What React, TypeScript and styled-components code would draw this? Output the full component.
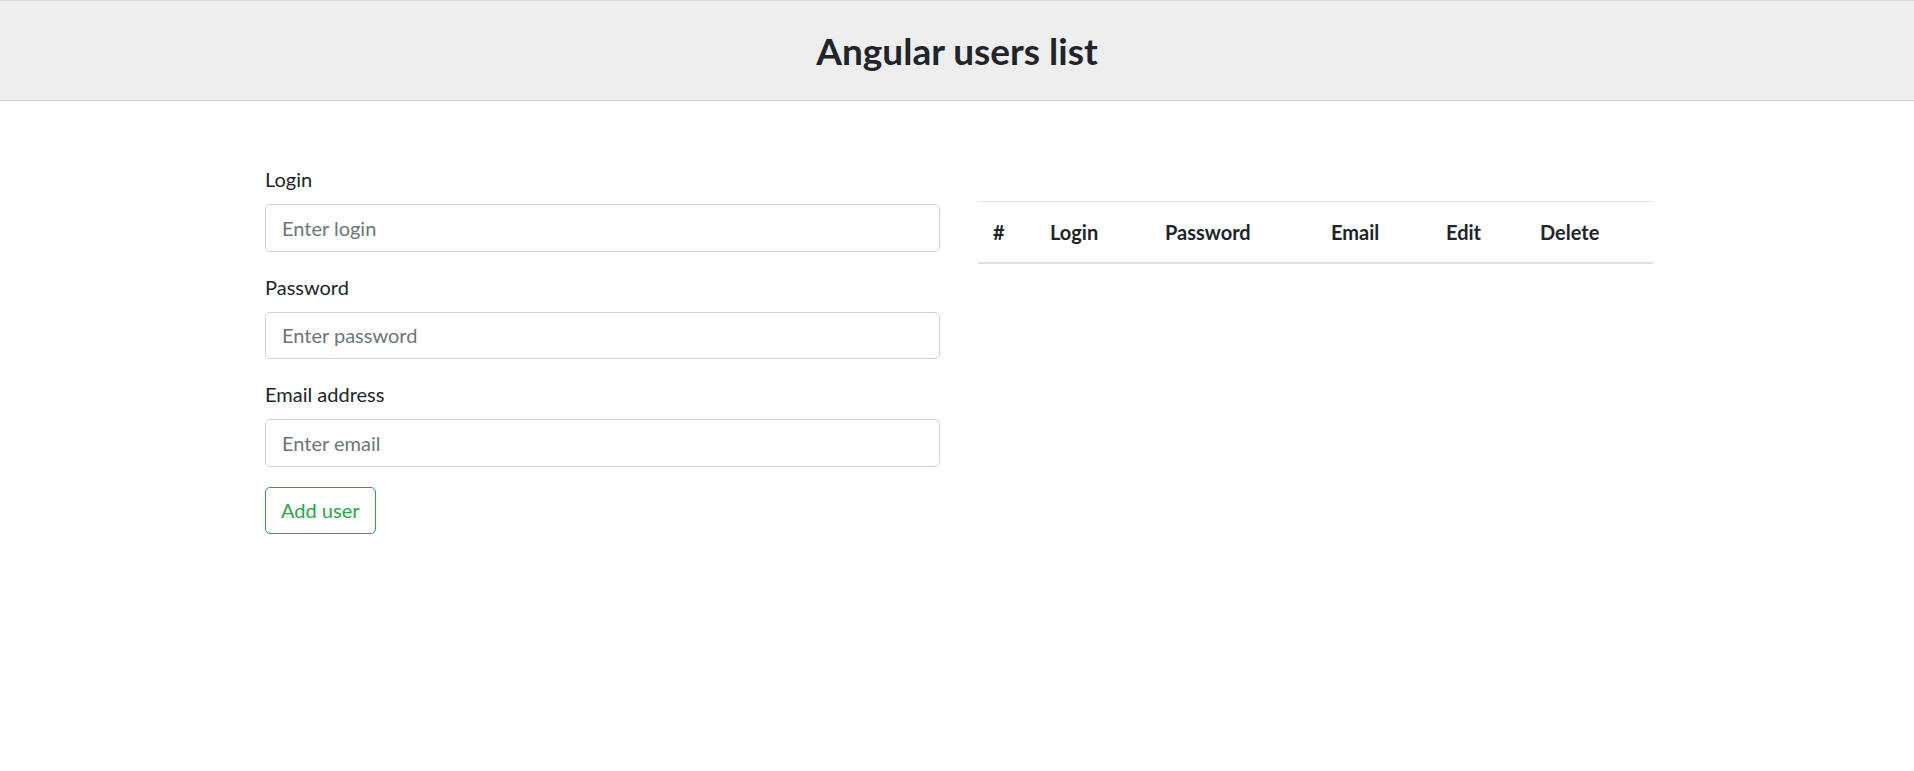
import React from "react";
import styled, { createGlobalStyle } from "styled-components";

const GlobalStyle = createGlobalStyle`
  html, body {
    margin: 0;
    padding: 0;
    background: #ffffff;
  }
  body {
    font-family: Lato, "Liberation Sans", sans-serif;
    color: #212529;
    font-size: 20px;
    line-height: 1.5;
  }
  * { box-sizing: border-box; }
`;

const Header = styled.header`
  height: 101px;
  padding-top: 2px;
  display: flex;
  align-items: center;
  justify-content: center;
  background: #eeeeee;
  border-top: 1px solid #dadada;
  border-bottom: 1px solid #d6d6d6;
`;

const Title = styled.h2`
  margin: 0;
  font-size: 37px;
  font-weight: 700;
  line-height: 1.2;
  color: #212529;
`;

const Container = styled.main`
  box-sizing: content-box;
  width: 1388px;
  margin: 0 auto;
  padding: 63px 0 0 4px;
`;

const Row = styled.div`
  display: grid;
  grid-template-columns: 1fr 1fr;
  column-gap: 38px;
  align-items: start;
`;

const Form = styled.form`
  display: flex;
  flex-direction: column;
`;

const FormGroup = styled.div`
  display: flex;
  flex-direction: column;
  margin-bottom: 20px;
`;

const Label = styled.label`
  font-size: 20px;
  line-height: 30px;
  margin-bottom: 10px;
  color: #212529;
`;

const Input = styled.input`
  height: 47.5px;
  width: 100%;
  padding: 0 16px;
  font-family: Lato, "Liberation Sans", sans-serif;
  font-size: 20px;
  color: #495057;
  background: #ffffff;
  border: 1px solid #ced4da;
  border-radius: 5px;
  outline: none;
  &::placeholder {
    color: #6c757d;
    opacity: 1;
  }
`;

const OutlineButton = styled.button`
  align-self: flex-start;
  height: 47.5px;
  padding: 0 15px;
  font-family: Lato, "Liberation Sans", sans-serif;
  font-size: 20px;
  line-height: 30px;
  color: #28a745;
  background: transparent;
  border: 1px solid #28a745;
  border-radius: 5px;
  cursor: pointer;
`;

const Table = styled.table`
  width: 100%;
  margin-top: 37px;
  border-collapse: collapse;
  table-layout: fixed;
`;

const HeadCell = styled.th`
  padding: 15px 15px 15px;
  font-size: 20px;
  line-height: 30px;
  font-weight: 700;
  text-align: left;
  vertical-align: bottom;
  color: #212529;
  border-top: 1px solid #dee2e6;
  border-bottom: 2px solid #dee2e6;
  white-space: nowrap;
`;

const fields = [
  { id: "login", label: "Login", type: "text", placeholder: "Enter login" },
  { id: "password", label: "Password", type: "password", placeholder: "Enter password" },
  { id: "email", label: "Email address", type: "email", placeholder: "Enter email" },
];

const columns = [
  { title: "#", width: 57 },
  { title: "Login", width: 115 },
  { title: "Password", width: 166 },
  { title: "Email", width: 115 },
  { title: "Edit", width: 94 },
  { title: "Delete", width: undefined as number | undefined },
];

export default function App() {
  return (
    <>
      <GlobalStyle />
      <Header>
        <Title>Angular users list</Title>
      </Header>
      <Container>
        <Row>
          <Form onSubmit={(e) => e.preventDefault()}>
            {fields.map((f) => (
              <FormGroup key={f.id}>
                <Label htmlFor={f.id}>{f.label}</Label>
                <Input id={f.id} type={f.type} placeholder={f.placeholder} />
              </FormGroup>
            ))}
            <OutlineButton type="submit">Add user</OutlineButton>
          </Form>
          <Table>
            <colgroup>
              {columns.map((c) => (
                <col key={c.title} style={c.width ? { width: c.width } : undefined} />
              ))}
            </colgroup>
            <thead>
              <tr>
                {columns.map((c) => (
                  <HeadCell key={c.title} scope="col">
                    {c.title}
                  </HeadCell>
                ))}
              </tr>
            </thead>
            <tbody />
          </Table>
        </Row>
      </Container>
    </>
  );
}
